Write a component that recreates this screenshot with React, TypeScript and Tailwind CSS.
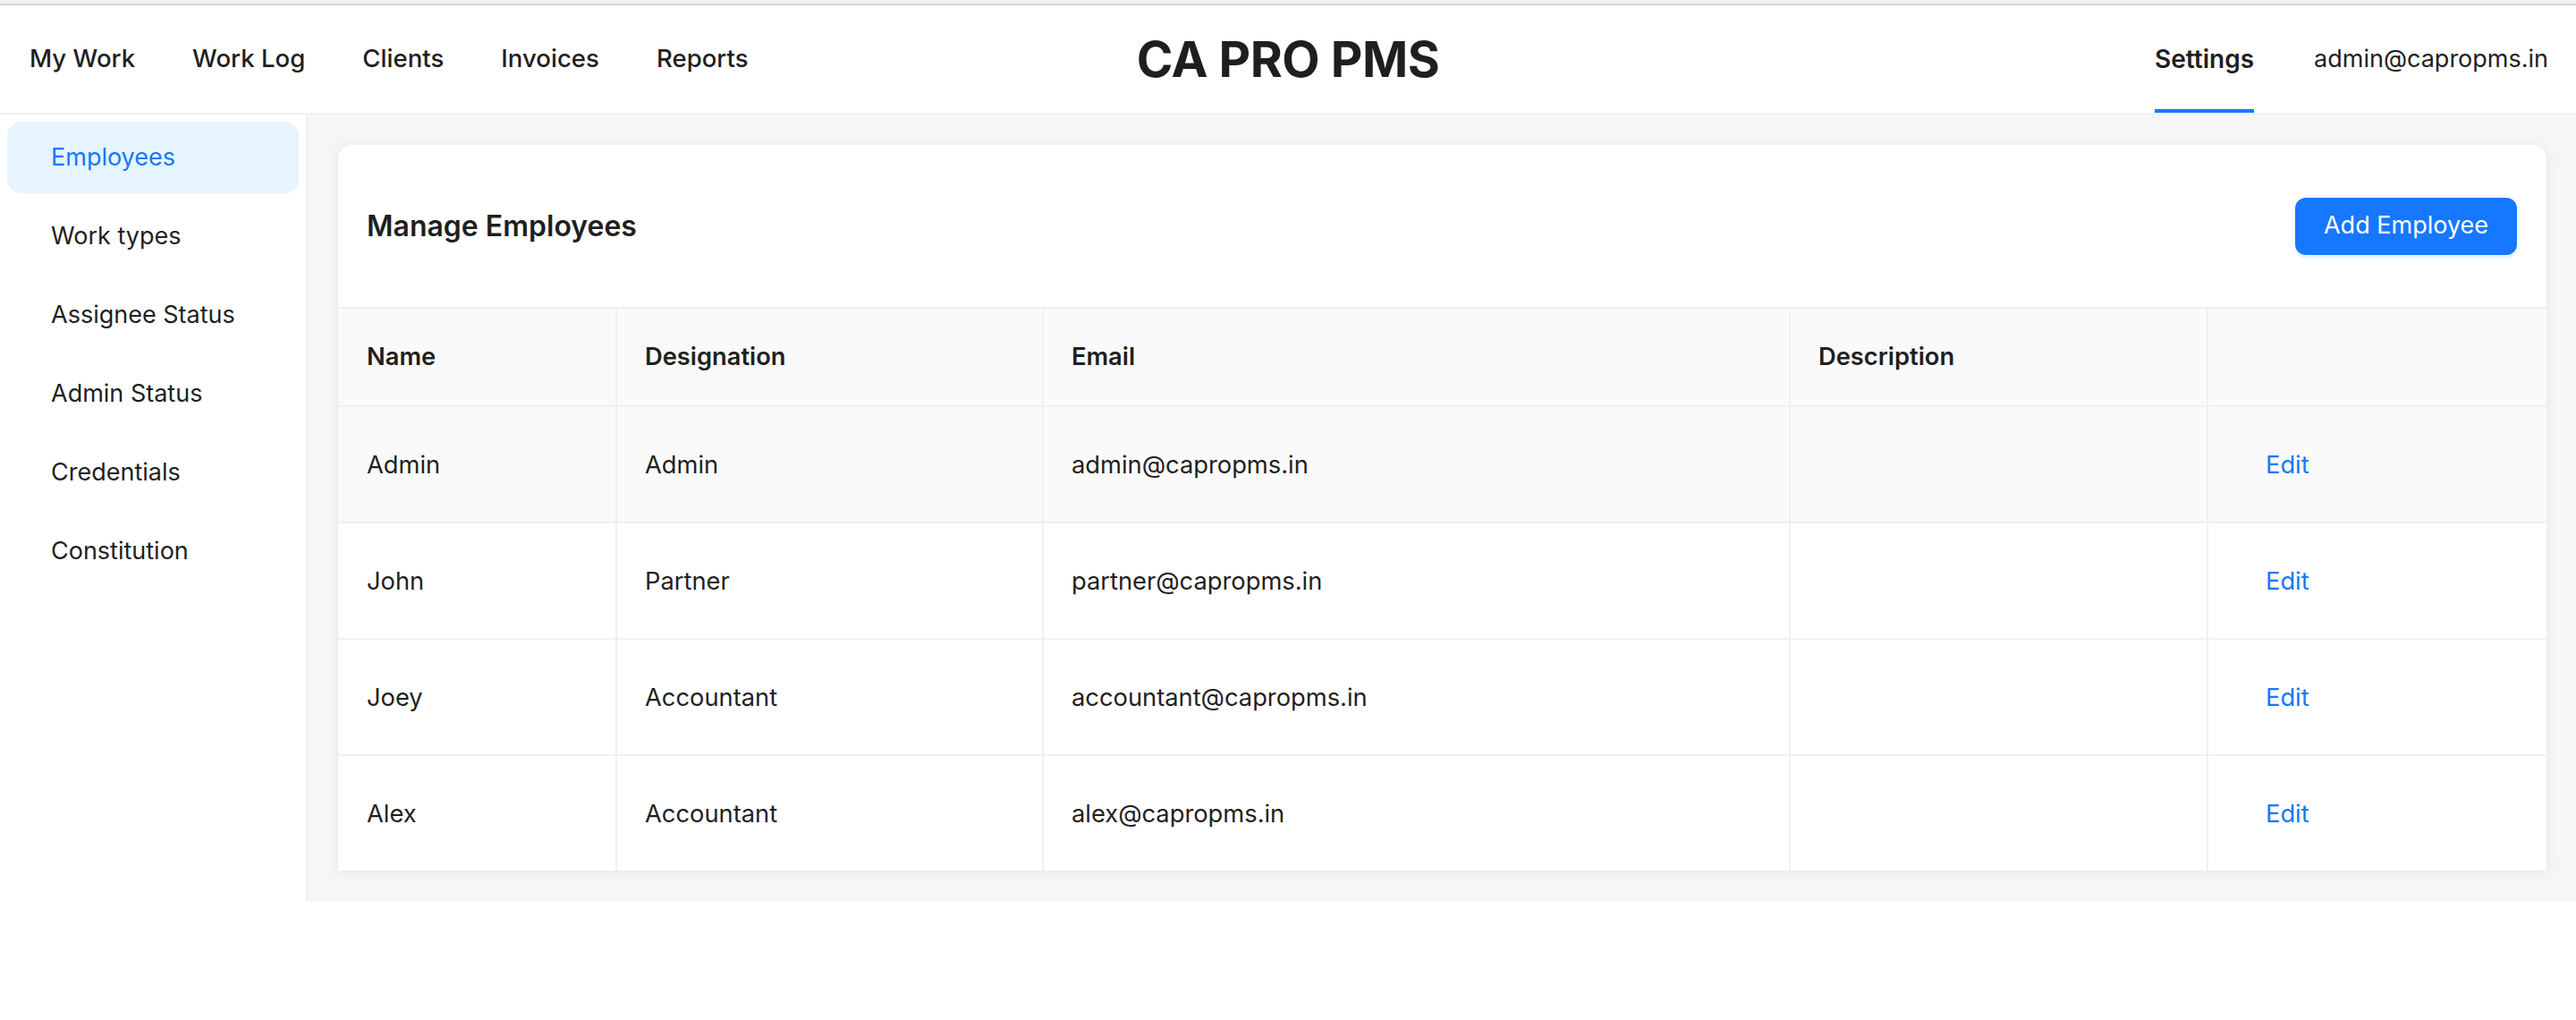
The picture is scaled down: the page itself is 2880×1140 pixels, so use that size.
import React from 'react'

/**
 * Settings > Employees page
 * Top nav, settings sidebar and the employee table card
 */

interface Employee {
  id: number
  name: string
  designation: string
  email: string
  description: string
}

const NAV_ITEMS = ['My Work', 'Work Log', 'Clients', 'Invoices', 'Reports']

const SIDEBAR_ITEMS = [
  'Employees',
  'Work types',
  'Assignee Status',
  'Admin Status',
  'Credentials',
  'Constitution',
]

const EMPLOYEES: Employee[] = [
  { id: 1, name: 'Admin', designation: 'Admin', email: 'admin@capropms.in', description: '' },
  { id: 2, name: 'John', designation: 'Partner', email: 'partner@capropms.in', description: '' },
  { id: 3, name: 'Joey', designation: 'Accountant', email: 'accountant@capropms.in', description: '' },
  { id: 4, name: 'Alex', designation: 'Accountant', email: 'alex@capropms.in', description: '' },
]

const COLS = 'grid grid-cols-[310px_477px_835px_467px_1fr]'

export default function App() {
  const activeItem = 'Employees'
  const hoveredRow = 1

  return (
    <div className="min-h-[1140px] bg-white font-['Inter','Noto_Sans',sans-serif] text-[#1f1f1f]">
      {/* Browser strip */}
      <div className="h-[6px] bg-[#f2f2f2] border-b-2 border-[#d6d6d6]" />

      {/* Header */}
      <header className="h-[122px] grid grid-cols-[1fr_auto_1fr] border-b-2 border-[#f0f0f0]">
        <nav className="flex items-center gap-[64px] pl-[33px] text-[27.6px] font-medium">
          {NAV_ITEMS.map((item) => (
            <a key={item} className="cursor-pointer">
              {item}
            </a>
          ))}
        </nav>

        <h1 className="self-center text-[55px] font-bold tracking-[-0.5px]">CA PRO PMS</h1>

        <div className="flex items-stretch justify-end gap-[67px] pr-[31px]">
          <a className="flex items-center border-b-4 border-[#1677ff] pt-[4px] text-[28px] font-semibold">
            Settings
          </a>
          <span className="flex items-center text-[27px]">admin@capropms.in</span>
        </div>
      </header>

      <div className="flex">
        {/* Sidebar */}
        <aside className="w-[344px] shrink-0 border-r-2 border-[#f0f0f0] pt-[8px] text-[27px]">
          {SIDEBAR_ITEMS.map((item) => (
            <div
              key={item}
              className={
                item === activeItem
                  ? 'mx-[8px] mb-[8px] h-[80px] flex items-center pl-[49px] rounded-[16px] bg-[#e6f4ff] text-[#1677ff]'
                  : 'mx-[8px] mb-[8px] h-[80px] flex items-center pl-[49px] rounded-[16px]'
              }
            >
              {item}
            </div>
          ))}
        </aside>

        {/* Main */}
        <main className="flex-1 bg-[#f5f6f8] pl-[34px] pr-[33px] py-[34px]">
          <div className="bg-white rounded-t-[16px] shadow-[0_2px_14px_rgba(0,0,0,0.07)]">
            <div className="h-[181px] flex items-center justify-between pl-[32px] pr-[33px]">
              <h2 className="text-[32px] font-semibold">Manage Employees</h2>
              <button className="h-[64px] w-[248px] rounded-[12px] bg-[#1677ff] text-white text-[27px] shadow-[0_4px_0_rgba(5,145,255,0.1)]">
                Add Employee
              </button>
            </div>

            {/* Table */}
            <div className="text-[27.3px]">
              <div className={`${COLS} h-[110px] bg-[#fafafa] border-t-2 border-[#f0f0f0] font-semibold`}>
                <div className="flex items-center pl-[32px]">Name</div>
                <div className="flex items-center pl-[31px] border-l-2 border-[#f0f0f0]">Designation</div>
                <div className="flex items-center pl-[31px] border-l-2 border-[#f0f0f0]">Email</div>
                <div className="flex items-center pl-[31px] border-l-2 border-[#f0f0f0]">Description</div>
                <div className="border-l-2 border-[#f0f0f0]" />
              </div>

              {EMPLOYEES.map((emp) => (
                <div
                  key={emp.id}
                  className={`${COLS} h-[130px] border-t-2 border-[#f0f0f0] ${emp.id === hoveredRow ? 'bg-[#fafafa]' : 'bg-white'}`}
                >
                  <div className="flex items-center pl-[32px] pt-[2px]">{emp.name}</div>
                  <div className="flex items-center pl-[31px] pt-[2px] border-l-2 border-[#f0f0f0]">{emp.designation}</div>
                  <div className="flex items-center pl-[31px] pt-[2px] border-l-2 border-[#f0f0f0]">{emp.email}</div>
                  <div className="flex items-center pl-[31px] pt-[2px] border-l-2 border-[#f0f0f0]">{emp.description}</div>
                  <div className="flex items-center pl-[64px] pt-[2px] border-l-2 border-[#f0f0f0]">
                    <a className="text-[#1677ff] cursor-pointer">Edit</a>
                  </div>
                </div>
              ))}
            </div>
          </div>
        </main>
      </div>
    </div>
  )
}
